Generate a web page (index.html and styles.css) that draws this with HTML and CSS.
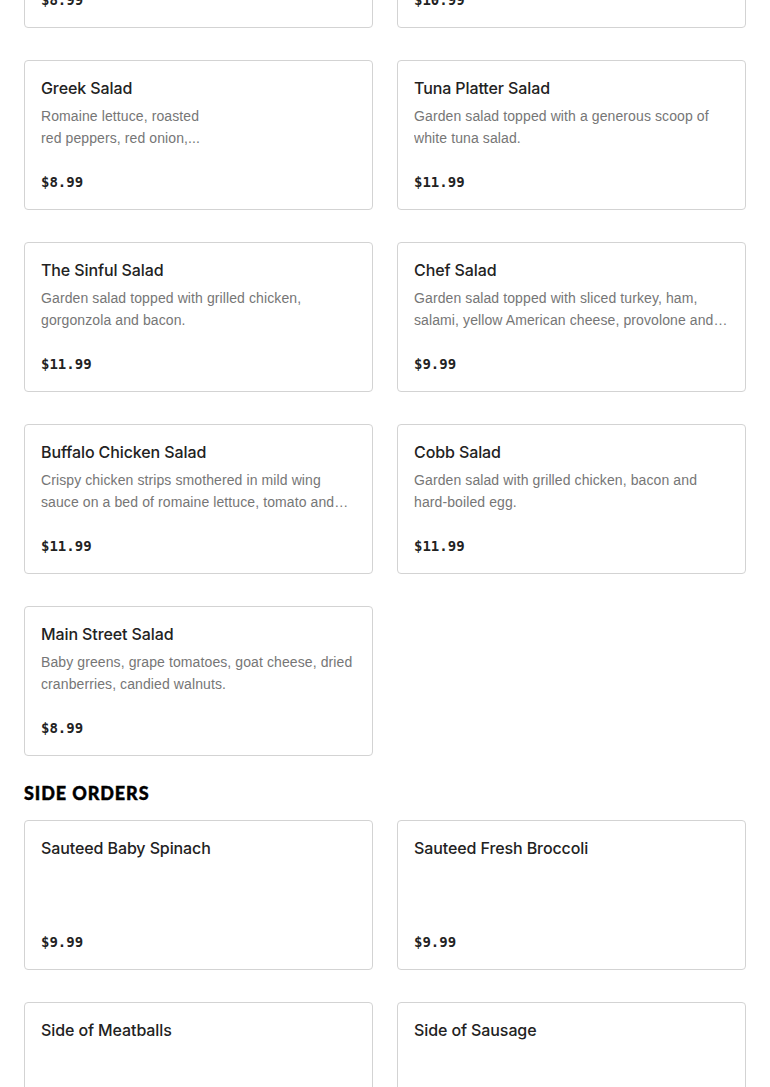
FILE: index.html
```html
<!DOCTYPE html>
<html lang="en">
<head>
<meta charset="utf-8">
<title>Menu</title>
<link rel="stylesheet" href="styles.css">
</head>
<body>
<main class="menu">
  <section class="section section-first">
    <div class="grid">
      <div class="card"><h3 class="title">House Salad</h3><p class="desc">Romaine lettuce, tomato, cucumber, red onion and carrots.</p><div class="price">$8.99</div></div>
      <div class="card"><h3 class="title">Caesar Salad</h3><p class="desc">Romaine lettuce, croutons and parmesan cheese.</p><div class="price">$10.99</div></div>
      <div class="card"><h3 class="title">Greek Salad</h3><p class="desc">Romaine lettuce, roasted<br>red peppers, red onion,...</p><div class="price">$8.99</div></div>
      <div class="card"><h3 class="title">Tuna Platter Salad</h3><p class="desc">Garden salad topped with a generous scoop of white tuna salad.</p><div class="price">$11.99</div></div>
      <div class="card"><h3 class="title">The Sinful Salad</h3><p class="desc">Garden salad topped with grilled chicken, gorgonzola and bacon.</p><div class="price">$11.99</div></div>
      <div class="card"><h3 class="title">Chef Salad</h3><p class="desc">Garden salad topped with sliced turkey, ham, salami, yellow American cheese, provolone and hard-boiled egg.</p><div class="price">$9.99</div></div>
      <div class="card"><h3 class="title">Buffalo Chicken Salad</h3><p class="desc">Crispy chicken strips smothered in mild wing sauce on a bed of romaine lettuce, tomato and red onion.</p><div class="price">$11.99</div></div>
      <div class="card"><h3 class="title">Cobb Salad</h3><p class="desc">Garden salad with grilled chicken, bacon and hard-boiled egg.</p><div class="price">$11.99</div></div>
      <div class="card"><h3 class="title">Main Street Salad</h3><p class="desc">Baby greens, grape tomatoes, goat cheese, dried cranberries, candied walnuts.</p><div class="price">$8.99</div></div>
    </div>
  </section>
  <section class="section">
    <h2 class="heading">SIDE ORDERS</h2>
    <div class="grid">
      <div class="card"><h3 class="title">Sauteed Baby Spinach</h3><div class="price">$9.99</div></div>
      <div class="card"><h3 class="title">Sauteed Fresh Broccoli</h3><div class="price">$9.99</div></div>
      <div class="card"><h3 class="title">Side of Meatballs</h3><div class="price">$7.99</div></div>
      <div class="card"><h3 class="title">Side of Sausage</h3><div class="price">$7.99</div></div>
    </div>
  </section>
</main>
</body>
</html>
```
FILE: styles.css
```css
* { box-sizing: border-box; }
html, body { margin: 0; padding: 0; background: #fff; }
body { font-family: "Liberation Sans", Arial, sans-serif; color: #222; overflow: hidden; }
.menu { padding: 0 24px; margin-top: -122px; }
.grid {
  display: grid;
  grid-template-columns: 1fr 1fr;
  column-gap: 24px;
  row-gap: 32px;
}
.card {
  height: 150px;
  border: 1px solid #d3d3d3;
  border-radius: 4px;
  padding: 15px 16px 17px;
  display: flex;
  flex-direction: column;
  background: #fff;
}
.title {
  margin: 0;
  font-family: "Inter", sans-serif;
  font-weight: 500;
  font-size: 16px;
  line-height: 24px;
  color: #222;
  letter-spacing: -0.1px;
}
.desc {
  margin: 5px 0 0;
  font-size: 14px;
  line-height: 22px;
  letter-spacing: 0.1px;
  color: #767676;
  display: -webkit-box;
  -webkit-line-clamp: 2;
  -webkit-box-orient: vertical;
  overflow: hidden;
}
.price {
  margin-top: auto;
  font-family: "DejaVu Sans Mono", monospace;
  font-weight: bold;
  font-size: 14px;
  line-height: 20px;
  color: #222;
}
.heading {
  margin: 25px 0 15px;
  font-family: "Lato", sans-serif;
  font-weight: 900;
  font-size: 18px;
  line-height: 24px;
  letter-spacing: 0.9px;
  -webkit-text-stroke: 0.4px #000;
  color: #000;
}
```
